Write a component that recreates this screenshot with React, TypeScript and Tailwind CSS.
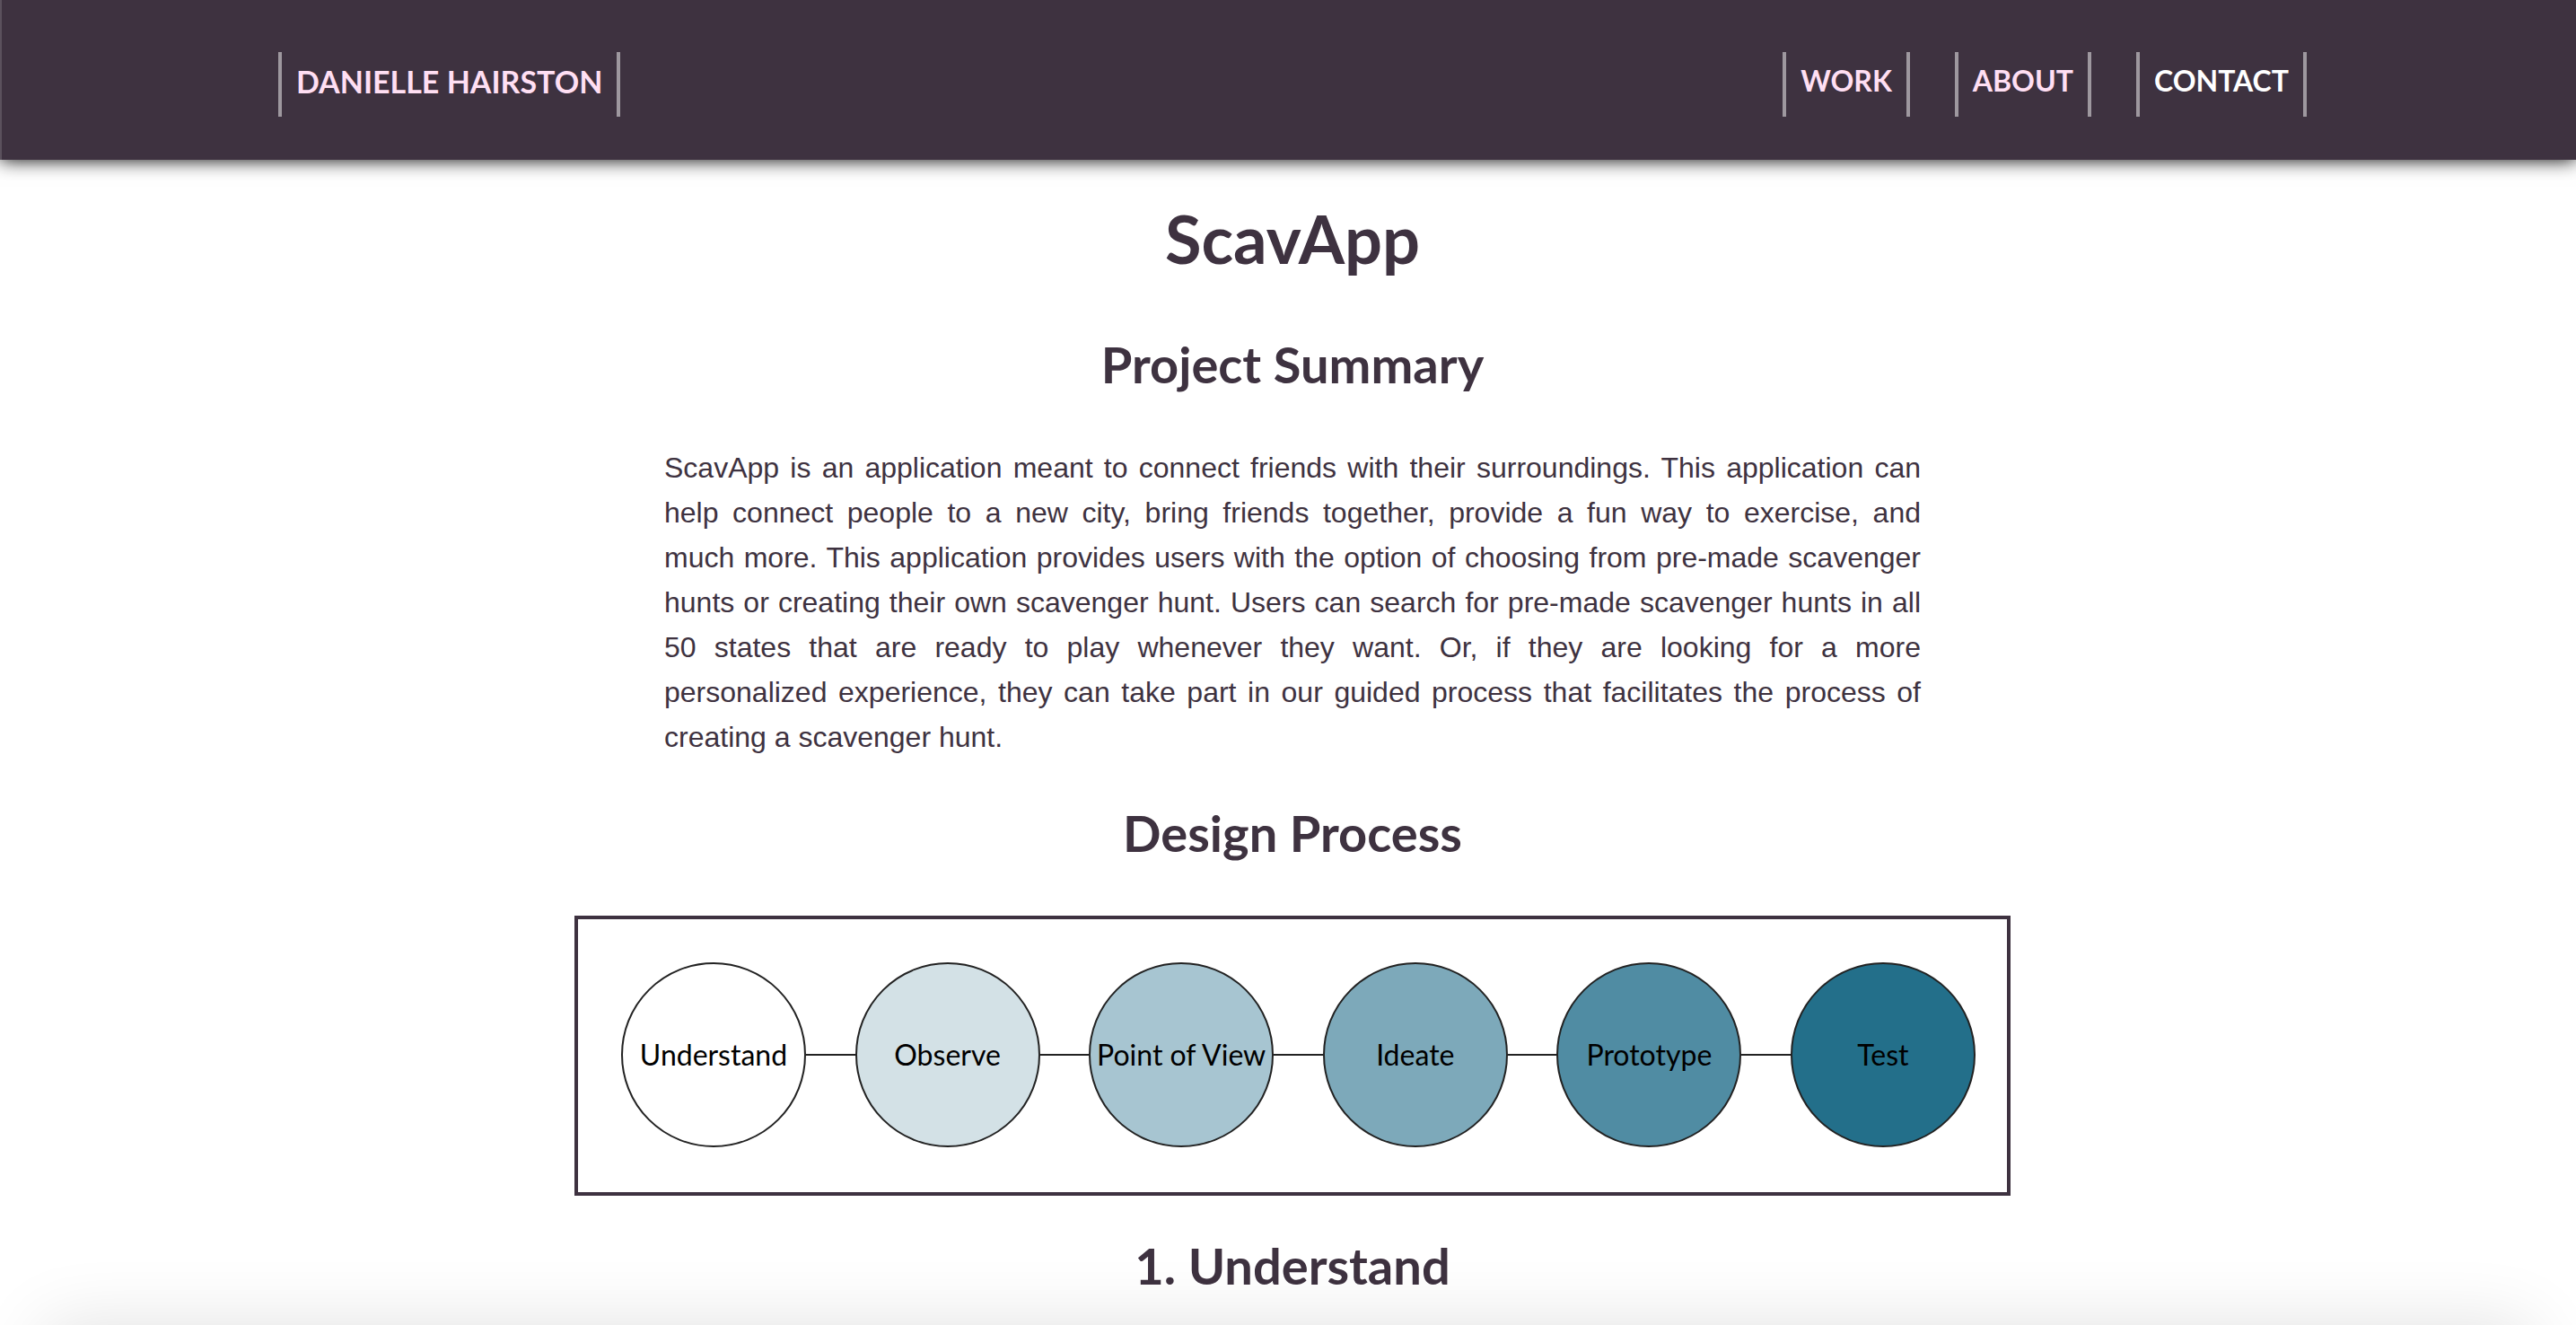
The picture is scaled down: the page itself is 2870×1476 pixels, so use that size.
const stages = [
  { name: "Understand", fill: "bg-white" },
  { name: "Observe", fill: "bg-[#d3e1e6]" },
  { name: "Point of View", fill: "bg-[#a7c5d1]" },
  { name: "Ideate", fill: "bg-[#7da9ba]" },
  { name: "Prototype", fill: "bg-[#508ca3]" },
  { name: "Test", fill: "bg-[#236f8a]" },
];

const links = [
  { name: "WORK", style: "text-[32px] text-[#ffdff3]" },
  { name: "ABOUT", style: "text-[32px] text-[#ffdff3]" },
  { name: "CONTACT", style: "text-[32px] text-white" },
];

function NavLink({ name, style }: { name: string; style: string }) {
  return (
    <a
      href="#"
      className={`flex h-[72px] items-center border-x-4 border-[#9e989f] px-4 pb-2 font-bold whitespace-nowrap ${style}`}
    >
      {name}
    </a>
  );
}

function SectionTitle({ children }: { children: string }) {
  return <h2 className="text-center text-[56px] leading-[68px] font-bold">{children}</h2>;
}

function DesignProcess() {
  return (
    <ol className="mx-auto mt-[58px] flex w-full max-w-[1600px] items-center border-4 border-[#3e3240] pt-12 pr-[35px] pb-[50px] pl-12 text-black">
      {stages.map((stage, i) => (
        <li key={stage.name} className={i > 0 ? "flex flex-1 items-center" : "flex items-center"}>
          {i > 0 && <span className="h-[2px] flex-1 bg-[#222]" />}
          <span
            className={`flex size-[206px] items-center justify-center rounded-full border-2 border-[#222] text-[32px] whitespace-nowrap ${stage.fill}`}
          >
            {stage.name}
          </span>
        </li>
      ))}
    </ol>
  );
}

export default function App() {
  return (
    <div className="min-h-screen bg-white font-['Lato',sans-serif] text-[#3e3240]">
      <header className="relative border-l-2 border-[#5b515d] bg-[#3e3240] pt-[58px] pr-[300px] pb-12 pl-[308px] shadow-[0_0_20px_#000]">
        <nav className="flex items-center justify-between">
          <NavLink name="DANIELLE HAIRSTON" style="text-[34px] text-[#ffdff3]" />
          <div className="flex gap-[50px]">
            {links.map((link) => (
              <NavLink key={link.name} name={link.name} style={link.style} />
            ))}
          </div>
        </nav>
      </header>

      <main className="pt-[44px] pl-[10px]">
        <h1 className="text-center text-[74px] leading-[88px] font-bold">ScavApp</h1>
        <div className="mt-[62px]">
          <SectionTitle>Project Summary</SectionTitle>
        </div>
        <p className="mx-auto mt-[56px] max-w-[1400px] text-justify font-['Liberation_Sans',sans-serif] text-[32px] leading-[50px]">
          <span className="block [text-align-last:justify]">
            ScavApp is an application meant to connect friends with their surroundings. This application can help
            connect people to a new city, bring friends together, provide a fun way to exercise, and{" "}
          </span>
          <span className="block [text-align-last:justify]">
            much more. This application provides users with the option of choosing from pre-made scavenger hunts or
            creating their own scavenger hunt. Users can search for pre-made scavenger hunts in all 50 states that are
            ready to play whenever they want. Or, if they are looking for a more{" "}
          </span>
          personalized experience, they can take part in our guided process that facilitates the process of creating a
          scavenger hunt.
        </p>
        <div className="mt-[48px]">
          <SectionTitle>Design Process</SectionTitle>
        </div>
        <DesignProcess />
        <div className="mt-[44px]">
          <SectionTitle>1. Understand</SectionTitle>
        </div>
      </main>

      <div className="pointer-events-none fixed inset-x-[50px] -bottom-40 h-40 shadow-[0_0_80px_rgba(0,0,0,0.12)]" />
    </div>
  );
}
